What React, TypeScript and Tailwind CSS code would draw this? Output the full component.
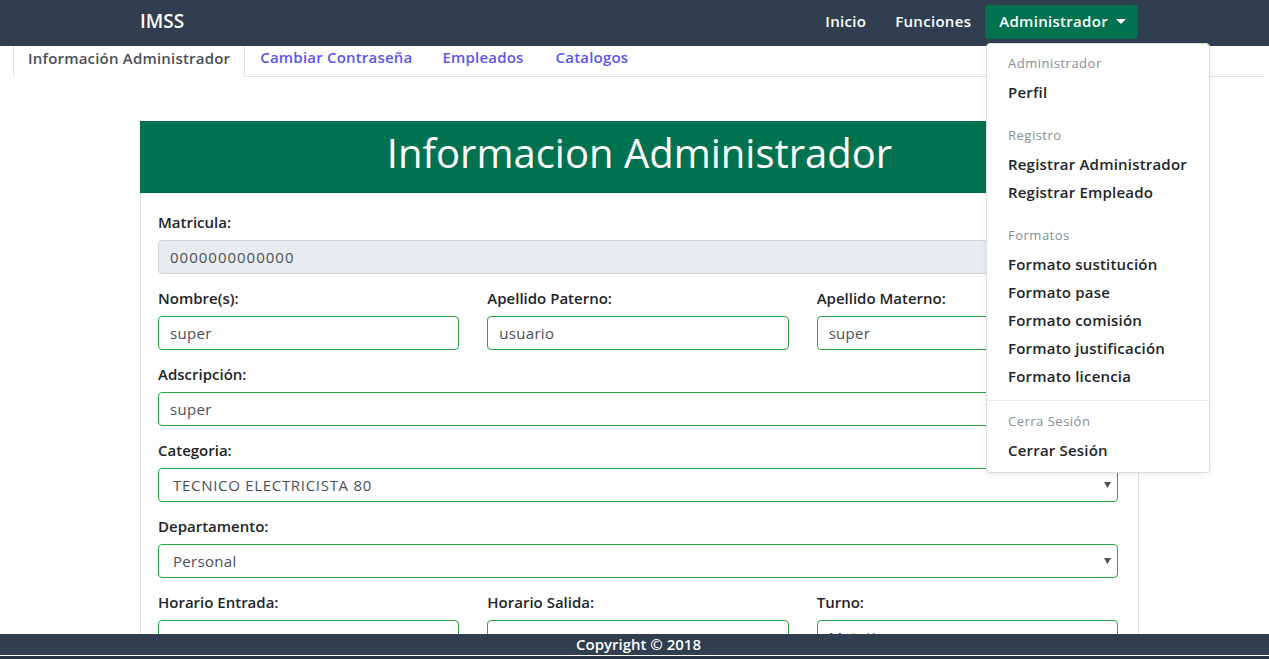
import { useState } from 'react';

const font = { fontFamily: '"Open Sans", "Liberation Sans", sans-serif' };

function Caret() {
  return (
    <svg width="10" height="6" viewBox="0 0 10 6" className="ml-[8px] mt-[1px]">
      <path d="M0 0 L10 0 L5 5 Z" fill="currentColor" />
    </svg>
  );
}

function Field({
  label,
  value,
  muted,
  select,
  track = 'tracking-[0.3px]',
}: {
  label: string;
  value: string;
  muted?: boolean;
  select?: boolean;
  track?: string;
}) {
  return (
    <div className="mb-[14px]">
      <div className="h-[20px] mb-[8px] leading-[20px] text-[15px] font-semibold text-[#212529]">{label}</div>
      <div
        className={
          muted
            ? 'h-[34px] rounded-[4px] border border-[#ced4da] bg-[#e9ecef] px-[11px] flex items-center text-[15px] font-medium text-[#495057]'
            : 'h-[34px] rounded-[4px] border border-[#28a745] bg-white flex items-center justify-between text-[15px] font-medium text-[#495057] ' +
              (select ? 'pl-[14px] pr-[6px]' : 'px-[11px]')
        }
      >
        <span className={track}>{value}</span>
        {select && (
          <svg width="7" height="6" viewBox="0 0 7 6">
            <path d="M0 0 L7 0 L3.5 6 Z" fill="#495057" />
          </svg>
        )}
      </div>
    </div>
  );
}

export default function App() {
  const [open] = useState(true);

  const groups = [
    { title: 'Administrador', items: ['Perfil'] },
    { title: 'Registro', items: ['Registrar Administrador', 'Registrar Empleado'] },
    {
      title: 'Formatos',
      items: ['Formato sustitución', 'Formato pase', 'Formato comisión', 'Formato justificación', 'Formato licencia'],
    },
  ];

  return (
    <div className="relative h-[659px] overflow-hidden bg-white" style={font}>
      {/* navbar */}
      <nav className="h-[46px] bg-[#303e50]">
        <div className="ml-[140px] w-[998px] h-full flex items-center justify-between pb-[3px]">
          <span className="text-[19px] font-semibold text-white">IMSS</span>
          <div className="flex items-center text-[15px] font-semibold tracking-[0.3px] text-white">
            <span className="px-[15px]">Inicio</span>
            <span className="px-[14px]">Funciones</span>
            <span className="h-[34px] pl-[14px] pr-[12px] rounded-[4px] bg-[#00724f] flex items-center">
              Administrador
              <Caret />
            </span>
          </div>
        </div>
      </nav>

      {/* tabs */}
      <div className="ml-[13px] mr-[4px] h-[31px] flex border-b border-[#dee2e6] text-[15px] font-semibold tracking-[0.2px]">
        <div className="-mb-px px-[14px] pb-[7px] flex items-center bg-white border-l border-r border-[#dee2e6] text-[#495057]">
          Información Administrador
        </div>
        <div className="px-[15px] pb-[7px] flex items-center text-[#5b55f2]">Cambiar Contraseña</div>
        <div className="px-[15px] pb-[7px] flex items-center text-[#5b55f2]">Empleados</div>
        <div className="pl-[17px] pr-[15px] pb-[7px] flex items-center text-[#5b55f2]">Catalogos</div>
      </div>

      {/* card */}
      <div className="ml-[140px] mt-[44px] w-[999px] border-l border-r border-[#dee2e6]">
        <div className="-mx-px h-[72px] pb-[8px] bg-[#00724f] flex items-center justify-center text-[40px] font-medium text-white">
          Informacion Administrador
        </div>
        <div className="pl-[17px] pr-[20px] pt-[19px]">
          <Field label="Matricula:" value="0000000000000" muted track="tracking-[1px]" />
          <div className="grid grid-cols-3 gap-x-[28px]">
            <Field label="Nombre(s):" value="super" />
            <Field label="Apellido Paterno:" value="usuario" />
            <Field label="Apellido Materno:" value="super" />
          </div>
          <Field label="Adscripción:" value="super" />
          <Field label="Categoria:" value="TECNICO ELECTRICISTA 80" select track="tracking-[0.7px]" />
          <Field label="Departamento:" value="Personal" select />
          <div className="grid grid-cols-3 gap-x-[28px]">
            <Field label="Horario Entrada:" value="" />
            <Field label="Horario Salida:" value="" />
            <Field label="Turno:" value="Matutino" />
          </div>
        </div>
      </div>

      {/* dropdown menu */}
      {open && (
        <div className="absolute left-[986px] top-[43px] w-[224px] rounded-[4px] border border-[#dcdcdc] bg-white pt-[6px] pb-[8px] shadow-[0_2px_6px_rgba(0,0,0,0.08)]">
          {groups.map((g, i) => (
            <div key={g.title} className={i > 0 ? 'mt-[16px]' : ''}>
              <div className="h-[28px] pl-[21px] flex items-center text-[13px] font-medium tracking-[0.5px] text-[#868e96]">
                {g.title}
              </div>
              {g.items.map((it) => (
                <div
                  key={it}
                  className="h-[28px] pl-[21px] flex items-center text-[15px] font-semibold tracking-[0.2px] text-[#212529]"
                >
                  {it}
                </div>
              ))}
            </div>
          ))}
          <div className="mt-[10px] mb-[7px] h-px bg-[#e9ecef]" />
          <div className="h-[28px] pl-[21px] flex items-center text-[13px] font-medium tracking-[0.5px] text-[#868e96]">
            Cerra Sesión
          </div>
          <div className="h-[28px] pl-[21px] flex items-center text-[15px] font-semibold tracking-[0.2px] text-[#212529]">
            Cerrar Sesión
          </div>
        </div>
      )}

      {/* footer */}
      <footer className="absolute bottom-0 left-0 right-0">
        <div className="h-[21px] pl-[8px] bg-[#303e50] flex items-center justify-center text-[15px] font-semibold text-white">
          Copyright © 2018
        </div>
        <div className="h-px bg-white" />
        <div className="h-[3px] bg-[#283342]" />
      </footer>
    </div>
  );
}
